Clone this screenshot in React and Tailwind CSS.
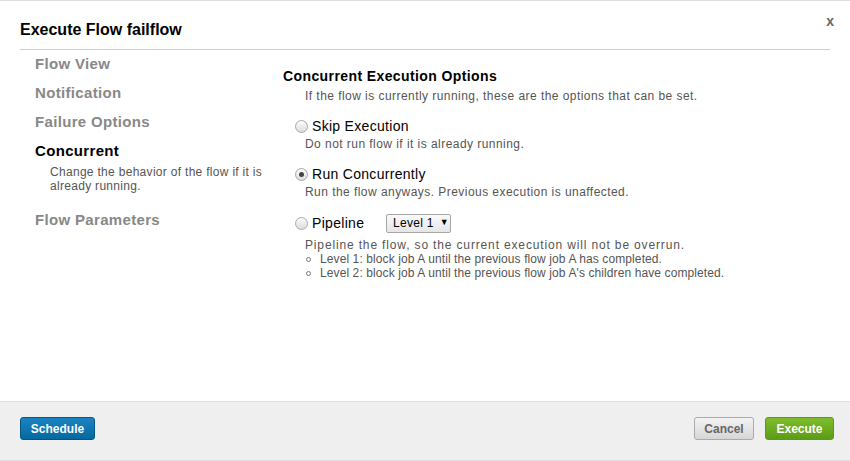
import { useState } from 'react';

const font = { fontFamily: '"Liberation Sans", Arial, sans-serif' };

function Radio({ checked }) {
  return (
    <span className="relative inline-block w-[13px] h-[13px] rounded-full border border-[#a9a9a9] bg-gradient-to-b from-[#fdfdfd] to-[#dcdcdc] mr-[4px] shrink-0">
      {checked && (
        <span className="absolute left-[3px] top-[3px] w-[5px] h-[5px] rounded-full bg-[#444]" />
      )}
    </span>
  );
}

function NavItem({ label, active, children }) {
  return (
    <div>
      <div className={`text-[15px] font-bold leading-[29px] tracking-[0.33px] ${active ? 'text-black' : 'text-[#888]'}`}>{label}</div>
      {children}
    </div>
  );
}

function Bullet({ children }) {
  return (
    <div className="flex items-center tracking-[0.1px]">
      <span className="w-[5px] h-[5px] rounded-full border border-[#777] ml-[1px] mr-[9px]" />
      {children}
    </div>
  );
}

export default function App() {
  const [mode, setMode] = useState('concurrent');

  return (
    <div className="w-[850px] h-[461px] bg-white flex flex-col border-t border-[#ddd] text-[#333]" style={font}>
      <div className="relative px-[20px] pt-[18px]">
        <h3 className="text-[16px] font-bold text-black leading-[22px] pb-[8px] border-b border-[#ccc] w-[810px]">
          Execute Flow failflow
        </h3>
        <button className="absolute right-[16px] top-[10px] text-[14px] font-bold text-[#666]">x</button>
      </div>

      <div className="flex flex-1 px-[20px]">
        <div className="w-[263px] pl-[15px] -mt-[1px]">
          <NavItem label="Flow View" />
          <NavItem label="Notification" />
          <NavItem label="Failure Options" />
          <NavItem label="Concurrent" active>
            <div className="pl-[15px] pr-[8px] text-[12px] leading-[14px] text-[#555] mb-[12px] tracking-[0.3px]">
              Change the behavior of the flow if it is already running.
            </div>
          </NavItem>
          <NavItem label="Flow Parameters" />
        </div>

        <div className="flex-1 pt-[16px] text-[12px] tracking-[0.45px]">
          <div className="text-[14px] font-bold text-black leading-[20px] tracking-[0.4px]">Concurrent Execution Options</div>
          <div className="pl-[22px] text-[#555] leading-[14px] mt-[3px]">
            If the flow is currently running, these are the options that can be set.
          </div>

          <div className="pl-[12px] mt-[13px]">
            <label className="flex items-center text-[14px] text-black leading-[20px] tracking-[0.3px]" onClick={() => setMode('skip')}>
              <Radio checked={mode === 'skip'} />
              Skip Execution
            </label>
            <div className="pl-[10px] text-[#555] leading-[14px] mt-[1px]">
              Do not run flow if it is already running.
            </div>

            <label className="flex items-center text-[14px] text-black leading-[20px] tracking-[0.3px] mt-[13px]" onClick={() => setMode('concurrent')}>
              <Radio checked={mode === 'concurrent'} />
              Run Concurrently
            </label>
            <div className="pl-[10px] text-[#555] leading-[14px] mt-[1px]">
              Run the flow anyways. Previous execution is unaffected.
            </div>

            <div className="flex items-center mt-[14px] h-[20px]">
              <label className="flex items-center text-[14px] text-black leading-[20px] tracking-[0.3px] w-[91px]" onClick={() => setMode('pipeline')}>
                <Radio checked={mode === 'pipeline'} />
                Pipeline
              </label>
              <div className="flex items-center h-[19px] w-[65px] border border-[#a6a6a6] rounded-[2px] bg-gradient-to-b from-[#fafafa] to-[#e6e6e6] text-black pl-[6px] tracking-[0.3px]">
                Level 1
                <span className="ml-[6px] text-[9px]">▼</span>
              </div>
            </div>

            <div className="pl-[10px] text-[#555] leading-[14px] mt-[5px]">
              <div className="tracking-[0.85px]">Pipeline the flow, so the current execution will not be overrun.</div>
              <Bullet>Level 1: block job A until the previous flow job A has completed.</Bullet>
              <Bullet>Level 2: block job A until the previous flow job A's children have completed.</Bullet>
            </div>
          </div>
        </div>
      </div>

      <div className="h-[60px] bg-[#efefef] border-t border-[#ddd] border-b border-b-[#ddd] flex items-start justify-between px-[20px] pt-[15px]">
        <button className="h-[23px] w-[75px] rounded-[3px] border border-[#04568a] bg-gradient-to-b from-[#1a84c2] to-[#05689f] text-white text-[12px] font-bold">
          Schedule
        </button>
        <div className="flex gap-[11px] mr-[-4px]">
          <button className="h-[23px] w-[60px] rounded-[3px] border border-[#aaa] bg-gradient-to-b from-[#f3f3f3] to-[#d6d6d6] text-[#666] text-[12px] font-bold">
            Cancel
          </button>
          <button className="h-[23px] w-[69px] rounded-[3px] border border-[#5a9a16] bg-gradient-to-b from-[#7dbd2c] to-[#5c9c16] text-white text-[12px] font-bold">
            Execute
          </button>
        </div>
      </div>
    </div>
  );
}
